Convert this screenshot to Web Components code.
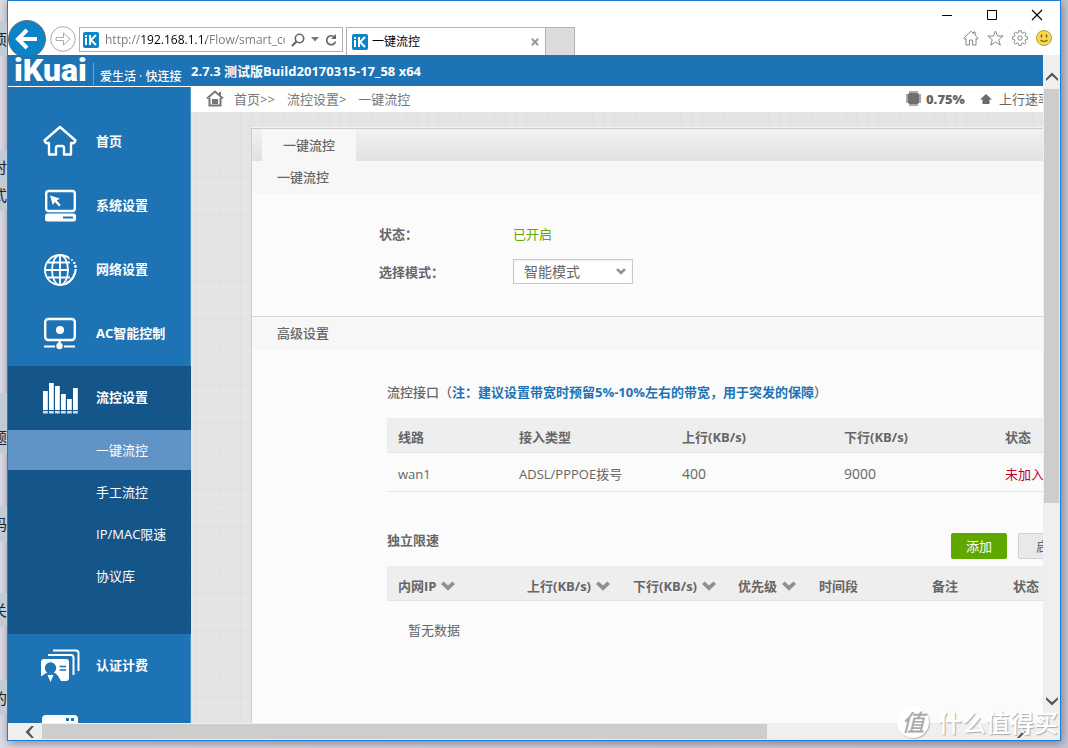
<!DOCTYPE html>
<html lang="zh-CN">
<head>
<meta charset="utf-8">
<title>一键流控</title>
<style>
html, body { height: 100%; margin: 0; }
body { font: 13px/20px "Open Sans", "Noto Sans CJK SC", sans-serif; color: #666; overflow: hidden; }
</style>
</head>
<body>
<desk-top></desk-top>
<script>
const define = (name, html, setup) => {
  const t = document.createElement('template');
  t.innerHTML = html;
  customElements.define(name, class extends HTMLElement {
    connectedCallback() {
      if (this.shadowRoot) return;
      const root = this.attachShadow({ mode: 'open' });
      root.append(t.content.cloneNode(true));
      if (setup) setup(this, root);
    }
  });
};

const ICONS = {
  back: ['0 0 38 38', '<circle cx="19" cy="19" r="18.5" fill="#0a84c6" stroke="#6b6f73"/><path d="M10 19h19M19 10l-9 9 9 9" fill="none" stroke="#fff" stroke-width="4"/>'],
  forward: ['0 0 26 26', '<circle cx="13" cy="13" r="12.3" fill="#fff" stroke="#a8a8a8"/><path d="M6 11.500h7.500v-4.500l6.500 6-6.500 6v-4.500h-7.500z" fill="none" stroke="#aaa"/>'],
  fav: ['0 0 16 16', '<rect width="16" height="16" rx="2" fill="#0a84c6"/><path d="M3 6v7M7 3v10M13 3 8 8l5 5" fill="none" stroke="#fff" stroke-width="2"/><path d="M2 3h2v2h-2z" fill="#fff"/>'],
  search: ['0 0 14 14', '<circle cx="8.500" cy="5.500" r="4.200" fill="none" stroke="#666" stroke-width="1.600"/><path d="M5.500 8.500 1 13" stroke="#666" stroke-width="2.200"/>'],
  caret: ['0 0 8 5', '<path d="M0 0h8l-4 4.500z" fill="#777"/>'],
  reload: ['0 0 12 14', '<path d="M9.500 4.200A4.500 4.500 0 1 0 10.500 8.500" fill="none" stroke="#666" stroke-width="1.700"/><path d="M11 1v5h-5z" fill="#666"/>'],
  x: ['0 0 8 8', '<path d="M.8.8l6.400 6.400M7.200.8.8 7.200" stroke="#999" stroke-width="2"/>'],
  min: ['0 0 12 12', '<path d="M1 6.500h10" stroke="#000"/>'],
  max: ['0 0 12 12', '<path d="M1.500 1.500h9v9h-9z" fill="none" stroke="#000"/>'],
  close: ['0 0 12 12', '<path d="M1 1l10 10M11 1 1 11" stroke="#000" stroke-width="1.100"/>'],
  ieHome: ['0 0 16 16', '<path d="M8 1.200 .8 8.200l1 1.200L3 8.500V15h3.500v-5h3v5H13V8.500l1.200.9 1-1.200-3-2.900V2h-1.700v1.700z" fill="none" stroke="#888"/>'],
  ieStar: ['0 0 17 16', '<path d="M8.500 1l2 5h5.700l-4.500 3.700 1.600 5.500-4.800-3.200-4.800 3.200 1.600-5.500L.8 6h5.700z" fill="none" stroke="#888"/>'],
  ieGear: ['0 0 16 16', '<path d="M6.800.7h2.400l.4 2 1.300.5L12.600 2l1.500 1.500-1.100 1.700.5 1.300 1.900.4v2.300l-1.900.4-.5 1.300 1.100 1.700-1.500 1.500-1.700-1.200-1.300.6-.4 1.900H6.800l-.4-1.900-1.300-.6-1.700 1.200-1.500-1.500L3 10.900l-.5-1.300-1.900-.4V6.900l1.900-.4L3 5.200 1.900 3.500 3.400 2l1.700 1.200 1.300-.5z" fill="none" stroke="#888"/><circle cx="8" cy="8" r="2.200" fill="none" stroke="#888"/>'],
  smile: ['0 0 16 16', '<circle cx="8" cy="8" r="7.500" fill="#fbd84b" stroke="#b29b4a"/><path d="M5.500 4.500v3M10.500 4.500v3" stroke="#665c2e" stroke-width="1.500"/><path d="M4.500 10q3.500 3 7 0" fill="none" stroke="#665c2e" stroke-width="1.200"/>'],
  up: ['0 0 12 9', '<path d="M0 6.500 6 .5l6 6v2.500L6 3.800 0 9z" fill="#555"/>'],
  down: ['0 0 12 9', '<path d="M0 2.500 6 8.500l6-6V0L6 5.200 0 0z" fill="#555"/>'],
  left: ['0 0 9 12', '<path d="M6.500 0 .5 6l6 6H9L4 6l5-6z" fill="#555"/>'],
  right: ['0 0 9 12', '<path d="M2.500 0 8.500 6l-6 6H0l5-6-5-6z" fill="#555"/>'],
  crumb: ['0 0 18 17', '<path d="M1 8.500 9 1.500l8 7" fill="none" stroke="#777" stroke-width="2"/><path d="M13 2h2v4h-2z" fill="#777"/><path d="M3.500 8v7.500h11V8" fill="none" stroke="#777" stroke-width="2"/><path d="M6 9h6v5H6z" fill="#777"/>'],
  chip: ['0 0 15 15', '<path d="M3 0h9v15H3z M0 3h15v9H0z" fill="#aaa"/><rect x="2" y="2" width="11" height="11" rx="2" fill="#707070"/>'],
  upload: ['0 0 12 10', '<path d="M6 0l6 5.500H9.500V10h-7V5.500H0z" fill="#6b6b6b"/>'],
  sort: ['0 0 14 10', '<path d="M0 3l2.600-2.500L7 4.400 11.400.5 14 3 7 9.800z" fill="#909090"/>'],
  home: ['0 0 36 36', '<path d="M18 4 2.500 17.500q1 3.500 4.500 2.500v11.500h7V25q0-2 2-2h4q2 0 2 2v6.500h7V20q3.500 1 4.500-2.500z" fill="none" stroke="#fff" stroke-width="2.400" stroke-linejoin="round"/>'],
  system: ['0 0 36 36', '<rect x="4.200" y="4" width="28.600" height="20" rx="2.500" fill="none" stroke="#fff" stroke-width="2.400"/><path d="M8 8.500l10 3-3.200 2 4 4.500-1.800 1.500-4-4.500-2.200 3z" fill="#fff"/><rect x="3" y="26.500" width="31" height="8" rx="2.500" fill="#fff"/><path d="M21 30.500h10" stroke="#1d73b3" stroke-width="2"/>'],
  globe: ['0 0 36 36', '<g fill="none" stroke="#fff" stroke-width="1.800"><circle cx="18" cy="19" r="15"/><ellipse cx="18" cy="19" rx="8" ry="15"/><path d="M18 4v30M3 19h24M6 11.500h22M6 26.500h22"/></g><path d="M27 4.500 36 7v12l-4 8-4-1 2-7z" fill="#1d73b3"/><path d="M33.800 18Q33 28 23.500 33" fill="none" stroke="#fff" stroke-width="2.200"/><g fill="#fff"><circle cx="30" cy="9" r="1"/><circle cx="32.300" cy="12" r="1.200"/><circle cx="33.500" cy="15.500" r="1.400"/></g>'],
  ac: ['0 0 36 36', '<rect x="3.200" y="4" width="29.600" height="21" rx="3" fill="none" stroke="#fff" stroke-width="2.400"/><circle cx="18" cy="15" r="4" fill="#fff"/><path d="M17.500 25v6M2 31.500h11M22 31.500h11" stroke="#fff" stroke-width="2.200"/><circle cx="17.500" cy="31" r="3.200" fill="#fff"/>'],
  bars: ['0 0 36 36', '<path d="M1 12h4.800v19H1zM7 4h4.800v27H7zM13 7h4.800v24H13zM19 15h4.800v16H19zM25 20h4.800v11H25zM31 9h4.800v22H31z" fill="#fff"/><path d="M1 32h4.800v2.500H1zM7 32h4.800v2.500H7zM13 32h4.800v2.500H13zM19 32h4.800v2.500H19zM25 32h4.800v2.500H25zM31 32h4.800v2.500H31z" fill="#cfe0ee"/>'],
  cards: ['0 0 40 36', '<path d="M13 3.500h23q2.500 0 2.500 2.500v18M8 8h23q2.500 0 2.500 2.500V28" fill="none" stroke="#fff" stroke-width="2"/><path d="M1 15q0-3 3-3h22q3 0 3 3v16q0 3-3 3h-5l-3-5q-2-3-4-3.500-3 2-7 0L1 29.500z" fill="#fff"/><circle cx="10.500" cy="21" r="5.700" fill="#1d73b3"/><path d="M7.500 28l3 7 3-7z" fill="#fff"/><path d="M19.500 19.500h6.500M19.500 23h6.500" stroke="#1d73b3" stroke-width="1.300"/>'],
  panel: ['0 0 36 36', '<rect width="36" height="30" y="4" rx="4" fill="#fff"/><path d="M24 7h3v3h-3zM29 7h3v3h-3z" fill="#1d73b3"/><path d="M3 13h30v17H3z" fill="#1d73b3"/>']
};
define('ik-icon', `<style>:host{display:block;flex:none}svg{display:block;width:100%;height:100%}</style>`, (el, root) => {
  const [box, body] = ICONS[el.getAttribute('name')];
  const w = el.getAttribute('w') || box.split(' ')[2], h = el.getAttribute('h') || box.split(' ')[3];
  el.style.width = w + 'px';
  el.style.height = h + 'px';
  root.innerHTML += `<svg viewBox="${box}" aria-hidden="true">${body}</svg>`;
});

/* Window chrome: navigation buttons, address bar, tabs and window controls */
define('browser-chrome', `<style>
:host{display:flex;height:54px;background:#fff;overflow:hidden;font-size:12px;color:#000}
button{border:0;padding:0;background:none;display:block;color:inherit;font:inherit}
.nav{display:flex;align-items:center;margin-top:19px;height:38px;gap:4px}
.addr{box-sizing:border-box;display:flex;align-items:center;gap:6px;margin:26px 3px 0 3px;width:264px;height:25px;border:1px solid #b0b0b0;padding:0 5px 0 3px}
input{flex:1;min-width:0;border:0;padding:0;margin:0;outline:0;font:12px/20px "Open Sans",sans-serif;color:#666;-webkit-text-fill-color:transparent;background:linear-gradient(90deg,#777 36px,#000 36px 101px,#777 101px);-webkit-background-clip:text;background-clip:text}
.tabs{display:flex;margin-top:26px;height:28px}
.tab{box-sizing:border-box;display:flex;align-items:center;gap:4px;width:200px;border:1px solid #b0b0b0;border-bottom:0;padding:0 6px 0 5px}
.tab span{flex:1}
.new{box-sizing:border-box;width:29px;height:28px;border:1px solid #b0b0b0;border-width:1px 1px 0 0;background:#dcdcdc}
.right{margin-left:auto;display:flex;flex-direction:column;align-items:flex-end;padding:8px 8px 0 0;gap:9px}
.win{display:flex;gap:33px;padding-right:9px}
.tools{display:flex;gap:8px}
</style>
<div class="nav"><button aria-label="后退"><ik-icon name="back"></ik-icon></button><button aria-label="前进"><ik-icon name="forward"></ik-icon></button></div>
<div class="addr"><ik-icon name="fav"></ik-icon><input aria-label="地址" value="http://192.168.1.1/Flow/smart_control"><button aria-label="搜索"><ik-icon name="search"></ik-icon></button><button aria-label="展开"><ik-icon name="caret"></ik-icon></button><button aria-label="刷新"><ik-icon name="reload"></ik-icon></button></div>
<div class="tabs"><div class="tab"><ik-icon name="fav"></ik-icon><span>一键流控</span><button aria-label="关闭标签"><ik-icon name="x"></ik-icon></button></div><button class="new" aria-label="新建标签"></button></div>
<div class="right"><div class="win"><button aria-label="最小化"><ik-icon name="min"></ik-icon></button><button aria-label="最大化"><ik-icon name="max"></ik-icon></button><button aria-label="关闭"><ik-icon name="close"></ik-icon></button></div>
<div class="tools"><button aria-label="主页"><ik-icon name="ieHome"></ik-icon></button><button aria-label="收藏"><ik-icon name="ieStar"></ik-icon></button><button aria-label="工具"><ik-icon name="ieGear"></ik-icon></button><button aria-label="反馈"><ik-icon name="smile"></ik-icon></button></div></div>`);

define('scroll-bar', `<style>
:host{display:flex;background:#efefef;min-width:0;min-height:0}
:host([vertical]){flex-direction:column}
button{box-sizing:border-box;border:0;padding:0;background:none;display:grid;place-items:center;width:34px;height:17px;flex:none}
:host([vertical]) button{width:17px;height:34px}
.track{flex:1;display:flex;padding-top:1px}
:host([vertical]) .track{flex-direction:column;padding:0 0 0 1px}
.thumb{background:#cdcdcd;flex:75;height:15px}
.track::after{content:"";flex:25}
:host([vertical]) .thumb{width:15px;height:auto;flex:69}
:host([vertical]) .track::after{flex:31}
.first{padding-left:9px}
.last{padding-right:9px}
:host([vertical]) .first{padding:9px 0 0}
:host([vertical]) .last{padding:0 0 9px}
</style><button class="first" aria-label="向前滚动"></button><div class="track"><div class="thumb"></div></div><button class="last" aria-label="向后滚动"></button>`, (el, root) => {
  const v = el.hasAttribute('vertical');
  const [a, b] = root.querySelectorAll('button');
  a.innerHTML = `<ik-icon name="${v ? 'up' : 'left'}"></ik-icon>`;
  b.innerHTML = `<ik-icon name="${v ? 'down' : 'right'}"></ik-icon>`;
});

define('app-header', `<style>
:host{display:flex;align-items:center;height:31px;background:#1d73b3;color:#fff;border-bottom:1px solid #fff;white-space:nowrap;font-weight:bold}
.logo{font:900 32px/31px Roboto,sans-serif;width:79px;padding-left:6px}
.slogan{align-self:flex-end;border-left:1px solid #6ba3cf;margin-bottom:1px;padding:6px 0 0 6px;line-height:16px;font-size:12px;font-weight:500;width:91px}
</style><span class="logo">iKuai</span><span class="slogan">爱生活 · 快连接</span><span>2.7.3 测试版Build20170315-17_58 x64</span>`);

define('nav-item', `<style>
:host{display:block}
a{box-sizing:border-box;display:flex;align-items:center;height:64px;padding:0 0 2px 34px;gap:18px;color:#fff;text-decoration:none;font-weight:bold;white-space:nowrap}
.pic{display:grid;grid-template-columns:36px;justify-content:center;justify-items:center}
:host([open]){background:#14558a}
:host([open]) .sub{padding-bottom:36px}
</style><a href="#"><div class="pic"></div><span></span></a><div class="sub"><slot></slot></div>`, (el, root) => {
  root.querySelector('span').textContent = el.getAttribute('label');
  root.querySelector('.pic').innerHTML = `<ik-icon name="${el.getAttribute('icon')}"></ik-icon>`;
});
define('nav-sub', `<style>
:host{display:block}
a{display:flex;align-items:center;height:40px;margin-bottom:2px;padding-left:88px;color:#fff;text-decoration:none;white-space:nowrap}
:host([active]) a{background:#6094c7}
</style><a href="#"><slot></slot></a>`);
define('side-bar', `<style>
:host{display:block;box-sizing:border-box;width:183px;background:#1d73b3;padding-top:23px;overflow:hidden;box-shadow:inset -1px 0 #4c93c6}
</style><nav>
<nav-item icon="home" label="首页"></nav-item>
<nav-item icon="system" label="系统设置"></nav-item>
<nav-item icon="globe" label="网络设置"></nav-item>
<nav-item icon="ac" label="AC智能控制"></nav-item>
<nav-item icon="bars" label="流控设置" open><nav-sub active>一键流控</nav-sub><nav-sub>手工流控</nav-sub><nav-sub>IP/MAC限速</nav-sub><nav-sub>协议库</nav-sub></nav-item>
<nav-item icon="cards" label="认证计费"></nav-item>
<nav-item icon="panel" label=""></nav-item>
</nav>`);

define('bread-crumb', `<style>
:host{box-sizing:border-box;display:flex;align-items:center;height:25px;background:#fff;padding:0 0 2px 15px;white-space:nowrap;overflow:hidden}
a{color:#777;text-decoration:none;margin-left:12px}
a:first-of-type{margin-left:10px}
.stats{margin-left:auto;flex:none;display:flex;align-items:center;width:137px;font-weight:bold;gap:5px}
.stats span{font-weight:normal;margin-left:2px}
.stats ik-icon+b+ik-icon{margin-left:10px}
</style><ik-icon name="crumb"></ik-icon><a href="#">首页&gt;&gt;</a><a href="#">流控设置&gt;</a><a href="#">一键流控</a>
<div class="stats"><ik-icon name="chip"></ik-icon><b>0.75%</b><ik-icon name="upload"></ik-icon><span>上行速率</span></div>`);

define('section-title', `<style>:host{display:block}h2{margin:0;padding:6px 25px;height:21px;font:500 13px/20px "Open Sans","Noto Sans CJK SC",sans-serif;background:#f7f7f7;color:#666}</style><h2><slot></slot></h2>`);

const TABLE_CSS = `<style>
:host{display:block}
table{border-collapse:collapse;table-layout:fixed;width:780px;color:#666}
th,td{text-align:left;padding:4px 0 0 11px;white-space:nowrap;border-bottom:1px solid #e3e3e3}
th{height:30px;background:#eee;font-weight:bold}
td{height:34px}
td.n{font-size:14px}
td.off{color:#c00030}
td.empty{border:0;padding:12px 0 0 21px}
ik-icon{display:inline-block;margin-left:5px}
</style>`;
define('line-table', TABLE_CSS + `<table><colgroup><col style="width:121px"><col style="width:163px"><col style="width:162px"><col style="width:161px"><col></colgroup>
<thead><tr><th>线路</th><th>接入类型</th><th>上行(KB/s)</th><th>下行(KB/s)</th><th>状态</th></tr></thead>
<tbody><tr><td>wan1</td><td>ADSL/PPPOE拨号</td><td class="n">400</td><td class="n">9000</td><td class="off">未加入</td></tr></tbody></table>`);
define('limit-table', TABLE_CSS + `<style>th{padding-top:5px;height:29px}</style><table><colgroup><col style="width:129px"><col style="width:106px"><col style="width:105px"><col style="width:81px"><col style="width:113px"><col style="width:81px"><col></colgroup>
<thead><tr><th>内网IP<ik-icon name="sort"></ik-icon></th><th>上行(KB/s)<ik-icon name="sort"></ik-icon></th><th>下行(KB/s)<ik-icon name="sort"></ik-icon></th><th>优先级<ik-icon name="sort"></ik-icon></th><th>时间段</th><th>备注</th><th>状态</th></tr></thead>
<tbody><tr><td class="empty" colspan="7">暂无数据</td></tr></tbody></table>`);

define('flow-panel', `<style>
:host{display:block;border:1px solid #ccc;border-width:1px 0 0 1px;background:#fbfbfb;overflow:hidden;box-shadow:0 -1px #f2f2f2}
.tabs{height:32px;background:linear-gradient(#f1f1f1,#e1e1e1);padding-left:10px;display:flex}
.tabs button{border:0;width:94px;background:#f7f7f7;padding:0;font:500 13px/20px "Open Sans","Noto Sans CJK SC",sans-serif;color:#666}
form{display:grid;grid-template-columns:134px 120px;align-items:center;row-gap:12px;padding:27px 0 32px 127px;border-bottom:1px solid #d9d9d9;grid-template-rows:26px 25px}
label,.k{font-weight:bold}
.c{font-family:"Noto Sans CJK TC",sans-serif;line-height:16px}
.on{color:#5fab00}
.pick{position:relative}
select{appearance:none;box-sizing:border-box;display:block;width:100%;height:25px;border:1px solid #c8c8c8;box-shadow:inset 0 1px 3px #eee;background:#fff;padding:0 24px 0 10px;font:14px/20px "Open Sans","Noto Sans CJK SC",sans-serif;color:#666}
.pick ik-icon{position:absolute;right:7px;top:9px;pointer-events:none}
.adv{padding:32px 0 20px 135px;width:780px}
p{margin:0 0 16px;height:20px;white-space:nowrap;font-weight:500}
p b{color:#1d73b3}
.bar{display:flex;align-items:center;height:26px;margin:41px 0 7px}
h3{margin:0 0 12px;font:bold 13px/20px "Open Sans","Noto Sans CJK SC",sans-serif;width:564px}
.bar button{box-sizing:border-box;height:26px;width:56px;padding:0;border:0;border-radius:2px;background:#5fa800;color:#fff;font:13px/24px "Open Sans","Noto Sans CJK SC",sans-serif;margin-right:11px}
.bar button.g{background:#e9e9e9;border:1px solid #d0d0d0;color:#666;width:62px}
</style>
<div class="tabs"><button>一键流控</button></div>
<section-title>一键流控</section-title>
<form><span class="k">状态<span class="c">：</span></span><span class="on">已开启</span><label for="mode">选择模式<span class="c">：</span></label><span class="pick"><select id="mode"><option>智能模式</option></select><ik-icon name="sort" w="10" h="7"></ik-icon></span></form>
<section-title>高级设置</section-title>
<div class="adv"><p>流控接口（<b>注<span class="c">：</span>建议设置带宽时预留5%-10%左右的带宽，用于突发的保障</b>）</p>
<line-table></line-table>
<div class="bar"><h3>独立限速</h3><button>添加</button><button class="g">启用</button></div>
<limit-table></limit-table></div>`);

define('app-page', `<style>
:host{display:flex;flex-direction:column;overflow:hidden;min-width:0;min-height:0}
.body{flex:1;min-height:0;display:flex}
main{flex:1;min-width:0;display:flex;flex-direction:column;background:repeating-linear-gradient(90deg,#0000 0 5px,#00000003 5px 7px,#0000 7px 11px),repeating-linear-gradient(#0000 0 4px,#ffffff18 4px 6px,#0000 6px 13px),#e4e4e4}
flow-panel{flex:1;margin:16px 0 0 60px}
</style><app-header></app-header><div class="body"><side-bar></side-bar><main><bread-crumb></bread-crumb><flow-panel></flow-panel></main></div>`);

define('browser-window', `<style>
:host{display:grid;grid-template:54px minmax(0,1fr) 17px / minmax(0,1fr) 17px;border:1px solid #1a7fd4;background:#efefef;box-shadow:1px 2px 9px #0006;overflow:hidden}
browser-chrome{grid-column:1/3}
</style><browser-chrome></browser-chrome><app-page></app-page><scroll-bar vertical></scroll-bar><scroll-bar></scroll-bar>`);

define('water-mark', `<style>
:host{position:absolute;right:10px;bottom:10px;display:flex;align-items:center;gap:9px;color:#fff;font:500 24px/32px "Noto Sans CJK SC",sans-serif;text-shadow:1px 1px 1px #aaa;pointer-events:none;white-space:nowrap}
i{width:32px;height:32px;border-radius:50%;background:#fff;color:#aaa;text-align:center;font-size:23px;line-height:30px;text-shadow:none;box-shadow:1px 1px 1px #bbb}
</style><i>值</i><span>什么值得买</span>`);

/* Desktop: the page behind shows a few highlighted lines past the window's left edge */
define('desk-top', `<style>
:host{display:grid;position:relative;height:100vh;background:linear-gradient(90deg,#dcdbe6,#c6c5d2);overflow:hidden}
browser-window{margin:0 7px 7px}
.peek{position:absolute;left:0;width:7px;overflow:hidden;background:#c0cbd5;color:#222;font-size:15px;line-height:28px;display:flex;flex-direction:column;align-items:flex-end;justify-content:center;white-space:nowrap}
</style>
<div class="peek" style="top:21px;height:35px"><span>项</span></div>
<div class="peek" style="top:150px;height:61px"><span>时</span><span>式</span></div>
<div class="peek" style="top:393px;height:60px"><span>，</span><span>题</span></div>
<div class="peek" style="top:506px;height:35px"><span>码</span></div>
<div class="peek" style="top:593px;height:34px"><span>关</span></div>
<div class="peek" style="top:680px;height:35px"><span>的</span></div>
<browser-window></browser-window><water-mark></water-mark>`);
</script>
</body>
</html>
